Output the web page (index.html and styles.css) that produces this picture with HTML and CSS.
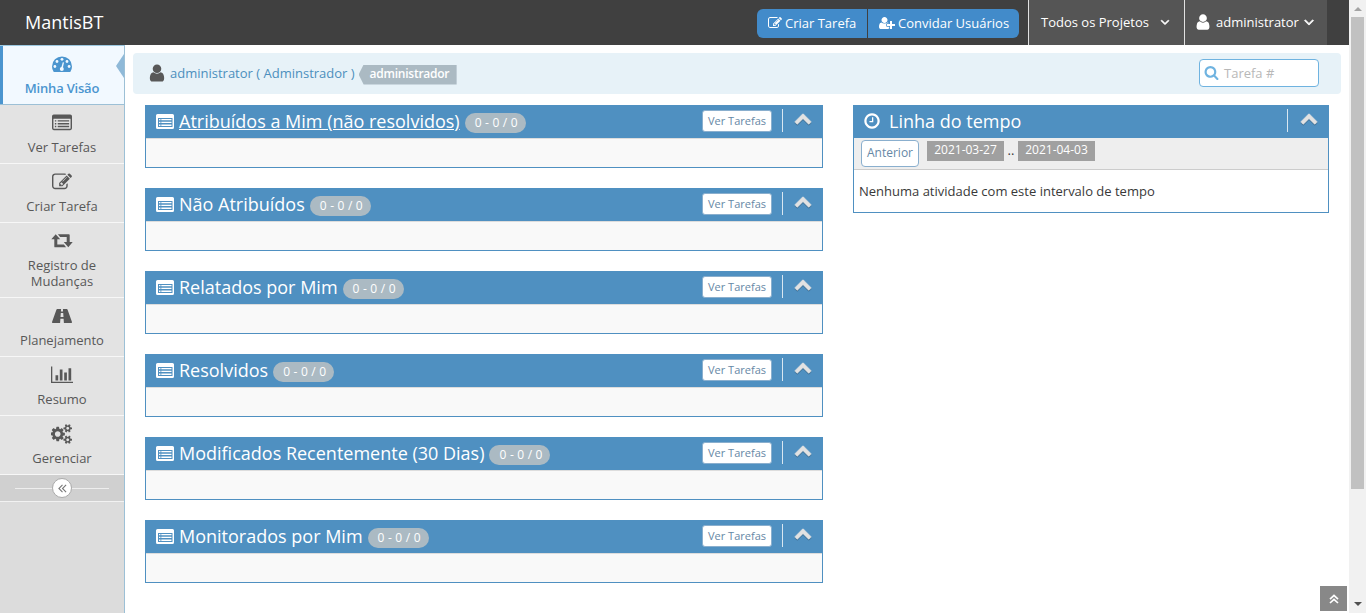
FILE: index.html
```html
<!DOCTYPE html>
<html lang="pt-BR">
<head>
<meta charset="utf-8">
<title>MantisBT</title>
<link rel="stylesheet" href="styles.css">
</head>
<body>
<svg class="defs" width="0" height="0">
  <symbol id="user" viewBox="0 0 1792 1792"><path d="M1536 1399q0 109-62.5 187t-150.5 78h-854q-88 0-150.5-78t-62.5-187q0-85 8.5-160.5t31.5-152 58.5-131 94-89 134.5-34.5q131 128 313 128t313-128q76 0 134.5 34.5t94 89 58.5 131 31.5 152 8.5 160.5zm-256-887q0 159-112.5 271.5t-271.5 112.5-271.5-112.5-112.5-271.5 112.5-271.5 271.5-112.5 271.5 112.5 112.5 271.5z"/></symbol>
  <symbol id="user-plus" viewBox="0 0 2048 1792"><path d="M704 896q-159 0-271.5-112.5t-112.5-271.5 112.500-271.5 271.5-112.5 271.5 112.5 112.500 271.5-112.5 271.5-271.5 112.500zm960 128h352q13 0 22.500 9.500t9.500 22.500v192q0 13-9.500 22.500t-22.500 9.500h-352v352q0 13-9.500 22.500t-22.500 9.500h-192q-13 0-22.500-9.500t-9.500-22.500v-352h-352q-13 0-22.500-9.500t-9.500-22.500v-192q0-13 9.500-22.500t22.500-9.500h352v-352q0-13 9.500-22.500t22.500-9.500h192q13 0 22.500 9.500t9.500 22.500v352zm-736 224q0 52 38 90t90 38h256v238q-68 50-171 50h-874q-121 0-194-69t-73-190q0-53 3.500-103.500t14-109 26.500-108.500 43-97.500 62-81 85.500-53.500 111.500-20q19 0 39 17 79 61 154.500 91.500t164.500 30.500 164.500-30.500 154.500-91.500q20-17 39-17 132 0 217 96h-223q-52 0-90 38t-38 90v192z"/></symbol>
  <symbol id="edit" viewBox="0 0 1792 1792"><path d="M888 1184l116-116-152-152-116 116v56h96v96h56zm440-720q-16-16-33 1l-350 350q-17 17-1 33t33-1l350-350q17-17 1-33zm80 594v190q0 119-84.5 203.5t-203.5 84.5h-832q-119 0-203.5-84.5t-84.5-203.5v-832q0-119 84.5-203.5t203.5-84.5h832q63 0 117 25 15 7 18 23 3 17-9 29l-49 49q-14 14-32 8-23-6-45-6h-832q-66 0-113 47t-47 113v832q0 66 47 113t113 47h832q66 0 113-47t47-113v-126q0-13 9-22l64-64q15-15 35-7t20 29zm-96-738l288 288-672 672h-288v-288zm444 132l-92 92-288-288 92-92q28-28 68-28t68 28l152 152q28 28 28 68t-28 68z"/></symbol>
  <symbol id="list" viewBox="0 0 1792 1792"><path fill-rule="evenodd" d="M160 128H1632Q1792 128 1792 288V1376Q1792 1536 1632 1536H160Q0 1536 0 1376V288Q0 128 160 128ZM160 512Q128 512 128 544V1376Q128 1408 160 1408H1632Q1664 1408 1664 1376V544Q1664 512 1632 512Z"/><path d="M256 640h128v128H256zM512 640h1024v128H512zM256 896h128v128H256zM512 896h1024v128H512zM256 1152h128v128H256zM512 1152h1024v128H512z"/></symbol>
  <symbol id="list-small" viewBox="0 0 18 18"><path fill-rule="evenodd" d="M1.500 2h15Q18 2 18 3.500v12q0 1.500-1.500 1.500h-15Q0 17 0 15.500v-12Q0 2 1.500 2zM2 6v9h14.500V6z"/><path d="M3 7h1.500v1.300H3zM5.300 7h10.200v1.300H5.300zM3 9.800h1.500v1.300H3zM5.300 9.800h10.200v1.300H5.300zM3 12.600h1.500v1.300H3zM5.300 12.600h10.200v1.300H5.300z"/></symbol>
  <symbol id="angle-down" viewBox="0 0 1792 1792"><path d="M1395 736q0 13-10 23l-466 466q-10 10-23 10t-23-10l-466-466q-10-10-10-23t10-23l50-50q10-10 23-10t23 10l393 393 393-393q10-10 23-10t23 10l50 50q10 10 10 23z"/></symbol>
  <symbol id="search" viewBox="0 0 1792 1792"><path d="M1216 832q0-185-131.5-316.5t-316.5-131.5-316.5 131.5-131.5 316.5 131.5 316.5 316.5 131.5 316.5-131.5 131.5-316.5zm512 832q0 52-38 90t-90 38q-54 0-90-38l-343-342q-179 124-399 124-143 0-273.5-55.5t-225-150-150-225-55.5-273.5 55.5-273.5 150-225 225-150 273.5-55.5 273.5 55.5 225 150 150 225 55.5 273.5q0 220-124 399l343 343q37 37 37 90z"/></symbol>
  <symbol id="clock" viewBox="0 0 1792 1792"><path d="M1024 544v448q0 14-9 23t-23 9h-320q-14 0-23-9t-9-23v-64q0-14 9-23t23-9h224v-352q0-14 9-23t23-9h64q14 0 23 9t9 23zm416 352q0-148-73-273t-198-198-273-73-273 73-198 198-73 273 73 273 198 198 273 73 273-73 198-198 73-273zm224 0q0 209-103 385.5t-279.5 279.5-385.5 103-385.5-103-279.5-279.5-103-385.5 103-385.5 279.5-279.5 385.5-103 385.5 103 279.5 279.5 103 385.5z"/></symbol>
  <symbol id="chevron-up" viewBox="0 0 1792 1792"><path d="M1683 1331l-166 165q-19 19-45 19t-45-19l-531-531-531 531q-19 19-45 19t-45-19l-166-165q-19-19-19-45.5t19-45.5l742-741q19-19 45-19t45 19l742 741q19 19 19 45.5t-19 45.5z"/></symbol>
  <symbol id="gears" viewBox="0 0 1920 1792"><path d="M832 896q0-106-75-181t-181-75-181 75-75 181 75 181 181 75 181-75 75-181zm768 512q0-52-38-90t-90-38-90 38-38 90q0 53 37.5 90.5t90.5 37.5 90.5-37.5 37.5-90.5zm0-1024q0-52-38-90t-90-38-90 38-38 90q0 53 37.5 90.5t90.5 37.5 90.5-37.5 37.5-90.5zm-384 421v185q0 10-7 19.5t-16 10.5l-155 24q-11 35-32 76 34 48 90 115 7 11 7 20 0 12-7 19-23 30-82.5 89.5t-78.5 59.5q-11 0-21-7l-115-90q-37 19-77 31-11 108-23 155-7 24-30 24h-186q-11 0-20-7.5t-10-17.5l-23-153q-34-10-75-31l-118 89q-7 7-20 7-11 0-21-8-144-133-144-160 0-9 7-19 10-14 41-53t47-61q-23-44-35-82l-152-24q-10-1-17-9.5t-7-19.5v-185q0-10 7-19.5t16-10.5l155-24q11-35 32-76-34-48-90-115-7-11-7-20 0-12 7-20 22-30 82-89t79-59q11 0 21 7l115 90q34-18 77-32 11-108 23-154 7-24 30-24h186q11 0 20 7.5t10 17.5l23 153q34 10 75 31l118-89q8-7 20-7 11 0 21 8 144 133 144 160 0 8-7 19-12 16-42 54t-45 60q23 48 34 82l152 23q10 2 17 10.5t7 19.5zm640 533v140q0 16-149 31-12 27-30 52 51 113 51 138 0 4-4 7-122 71-124 71-8 0-46-47t-52-68q-20 2-30 2t-30-2q-14 21-52 68t-46 47q-2 0-124-71-4-3-4-7 0-25 51-138-18-25-30-52-149-15-149-31v-140q0-16 149-31 13-29 30-52-51-113-51-138 0-4 4-7 4-2 35-20t59-34 30-16q8 0 46 46.5t52 67.5q20-2 30-2t30 2q51-71 92-112l6-2q4 0 124 70 4 3 4 7 0 25-51 138 17 23 30 52 149 15 149 31zm0-1024v140q0 16-149 31-12 27-30 52 51 113 51 138 0 4-4 7-122 71-124 71-8 0-46-47t-52-68q-20 2-30 2t-30-2q-14 21-52 68t-46 47q-2 0-124-71-4-3-4-7 0-25 51-138-18-25-30-52-149-15-149-31v-140q0-16 149-31 13-29 30-52-51-113-51-138 0-4 4-7 4-2 35-20t59-34 30-16q8 0 46 46.5t52 67.5q20-2 30-2t30 2q51-71 92-112l6-2q4 0 124 70 4 3 4 7 0 25-51 138 17 23 30 52 149 15 149 31z"/></symbol>
  <symbol id="double-left" viewBox="0 0 10 10"><path d="M5 1L1 5l4 4M9 1L5 5l4 4" fill="none" stroke="currentColor" stroke-width="1.2"/></symbol>
  <symbol id="double-up" viewBox="0 0 10 10"><path d="M1 5.200L5 1.500l4 3.700M1 9L5 5.300 9 9" fill="none" stroke="currentColor" stroke-width="1.700"/></symbol>
</svg>

<div class="app">
  <header class="navbar">
    <span class="brand">MantisBT</span>
    <div class="actions">
      <a class="action"><svg class="i14"><use href="#edit"/></svg>Criar Tarefa</a>
      <a class="action invite"><svg class="i-plus"><use href="#user-plus"/></svg>Convidar Usuários</a>
    </div>
    <div class="menu projects">Todos os Projetos<svg class="i14 bold"><use href="#angle-down"/></svg></div>
    <div class="menu account"><svg class="i18"><use href="#user"/></svg><span>administrator</span><svg class="i16 bold"><use href="#angle-down"/></svg></div>
  </header>

  <div class="body">
    <nav class="sidebar">
      <a class="item active">
        <svg class="i20" viewBox="0 0 20 20"><path d="M0 11.400a10 10 0 0 1 20 0q0 2.900-1.600 5.300-.2.300-.6.300H2.200q-.4 0-.6-.3Q0 14.300 0 11.400z"/><g fill="#f2f9ff"><circle cx="2.900" cy="11.500" r="1.400"/><circle cx="5" cy="6.500" r="1.400"/><circle cx="10" cy="4.300" r="1.400"/><circle cx="15" cy="6.500" r="1.400"/><circle cx="17.100" cy="11.500" r="1.400"/><circle cx="9.800" cy="14" r="2"/><path d="M10.800 7.200l1.200.3-1.300 6-1.500-.4z"/></g></svg>
        <span>Minha Visão</span><i class="arrow"></i>
      </a>
      <a class="item"><svg class="i20"><use href="#list"/></svg><span>Ver Tarefas</span></a>
      <a class="item"><svg class="i20"><use href="#edit"/></svg><span>Criar Tarefa</span></a>
      <a class="item double"><svg class="i-wide" viewBox="0 0 22 20"><path d="M4.700 3.200L9.200 8.300H6.300v5.300h6.600l2.200 2.700H4.200q-.9 0-.9-.9V8.300H.3zM17.300 16.300l-4.500-5.200h2.900V5.900H9.100L6.900 3.200h10.900q.9 0 .9.900v7h3z"/></svg><span>Registro de<br>Mudanças</span></a>
      <a class="item"><svg class="i20" viewBox="0 0 20 20"><path fill-rule="evenodd" d="M5.200 3h3.900l-.2 2.500h2.200L10.900 3h3.900q.5 0 .7.500l4.400 12.300q.4 1.200-.5 1.200h-7.500l-.3-4.200H8.400L8.100 17H.6q-.9 0-.5-1.200L4.500 3.500Q4.700 3 5.200 3zM8.800 7L8.500 11h3L11.200 7z"/></svg><span>Planejamento</span></a>
      <a class="item"><svg class="i-wide" viewBox="0 0 22 20"><path d="M0 1.500h1.300v15.200H23V18H0zM4.500 10.200h2.700v5.200H4.500zM8.800 4.600h2.700v10.800H8.800zM13.200 7.400h2.700v8H13.200zM17.500 3.200h2.700v12.200h-2.700z"/></svg><span>Resumo</span></a>
      <a class="item"><svg class="i-wide"><use href="#gears"/></svg><span>Gerenciar</span></a>
      <div class="toggle"><span class="knob"><svg><use href="#double-left"/></svg></span></div>
    </nav>

    <main class="main">
      <div class="crumbs">
        <svg class="i20"><use href="#user"/></svg>
        <span class="who">administrator ( Adminstrador )</span>
        <span class="role">administrador</span>
        <label class="find"><svg class="i15"><use href="#search"/></svg>Tarefa #</label>
      </div>
      <div class="columns">
        <div class="left">
          <section class="panel"><h4><svg class="i18"><use href="#list-small"/></svg><a class="linked">Atribuídos a Mim (não resolvidos)</a><span class="badge">0 - 0 / 0</span><a class="view">Ver Tarefas</a><span class="fold"><svg class="i18"><use href="#chevron-up"/></svg></span></h4><div class="empty"></div></section>
          <section class="panel"><h4><svg class="i18"><use href="#list-small"/></svg><a>Não Atribuídos</a><span class="badge">0 - 0 / 0</span><a class="view">Ver Tarefas</a><span class="fold"><svg class="i18"><use href="#chevron-up"/></svg></span></h4><div class="empty"></div></section>
          <section class="panel"><h4><svg class="i18"><use href="#list-small"/></svg><a>Relatados por Mim</a><span class="badge">0 - 0 / 0</span><a class="view">Ver Tarefas</a><span class="fold"><svg class="i18"><use href="#chevron-up"/></svg></span></h4><div class="empty"></div></section>
          <section class="panel"><h4><svg class="i18"><use href="#list-small"/></svg><a>Resolvidos</a><span class="badge">0 - 0 / 0</span><a class="view">Ver Tarefas</a><span class="fold"><svg class="i18"><use href="#chevron-up"/></svg></span></h4><div class="empty"></div></section>
          <section class="panel"><h4><svg class="i18"><use href="#list-small"/></svg><a>Modificados Recentemente (30 Dias)</a><span class="badge">0 - 0 / 0</span><a class="view">Ver Tarefas</a><span class="fold"><svg class="i18"><use href="#chevron-up"/></svg></span></h4><div class="empty"></div></section>
          <section class="panel"><h4><svg class="i18"><use href="#list-small"/></svg><a>Monitorados por Mim</a><span class="badge">0 - 0 / 0</span><a class="view">Ver Tarefas</a><span class="fold"><svg class="i18"><use href="#chevron-up"/></svg></span></h4><div class="empty"></div></section>
        </div>
        <section class="panel timeline">
          <h4><svg class="i18"><use href="#clock"/></svg><a>Linha do tempo</a><span class="fold"><svg class="i18"><use href="#chevron-up"/></svg></span></h4>
          <div class="range"><a class="prev">Anterior</a><span class="date">2021-03-27</span><span class="dots">..</span><span class="date">2021-04-03</span></div>
          <p class="none">Nenhuma atividade com este intervalo de tempo</p>
        </section>
      </div>
    </main>
  </div>
</div>
<div class="scrollbar"><i class="up"></i><i class="thumb"></i><i class="down"></i></div>
<a class="to-top"><svg><use href="#double-up"/></svg></a>
</body>
</html>
```
FILE: styles.css
```css
* { box-sizing: border-box; }
body { margin: 0; display: flex; height: 613px; overflow: hidden; background: #fff; color: #393939; font: 13px/20px "Open Sans", sans-serif; }
svg { fill: currentColor; flex: none; display: block; }
.defs { position: absolute; }
.i14 { width: 14px; height: 14px; }
.i15 { width: 15px; height: 15px; }
.i16 { width: 16px; height: 16px; }
.i18 { width: 18px; height: 18px; }
.i20 { width: 20px; height: 20px; }
.i-wide { width: 22px; height: 20px; }
.i-plus { width: 16px; height: 14px; }
.bold { stroke: currentColor; stroke-width: 90; }
.app { width: 1349px; display: flex; flex-direction: column; }

.navbar { height: 45px; flex: none; display: flex; background: #404040; color: #fff; padding-right: 22px; }
.brand { font-size: 18px; line-height: 45px; padding-left: 25px; margin-right: auto; }
.actions { display: flex; gap: 1px; margin: 9px 9px 0 0; height: 29px; }
.action { width: 110px; display: flex; align-items: center; gap: 3px; background: #428bca; padding: 0 0 1px 11px; border-radius: 6px 0 0 6px; white-space: nowrap; }
.invite { width: 151px; border-radius: 0 6px 6px 0; }
.menu { display: flex; align-items: center; background: #555; border-left: 1px solid #e1e1e1; padding-bottom: 1px; }
.projects { width: 156px; padding-left: 12px; gap: 9px; }
.account { width: 143px; padding-left: 9px; gap: 4px; }
.account .i16 { margin-left: -2px; }

.body { display: flex; flex: 1; min-height: 0; }
.sidebar { width: 125px; background: #dcdcdc; border-right: 1px solid #9cc0d6; }
.item { display: flex; flex-direction: column; align-items: center; height: 59px; padding-top: 8px; background: #e3e3e3; border-bottom: 1px solid #f7f7f7; color: #585858; text-align: center; line-height: 16px; }
.item span { margin-top: 6px; }
.double { height: 75px; }
.active { position: relative; height: 60px; padding-top: 9px; background: #f2f9ff; border-top: 1px solid #9cc8e0; border-bottom: 1px solid #9cc0d6; box-shadow: inset 3px 0 #4b95cf; color: #4b95cf; font-weight: 600; letter-spacing: -.2px; }
.active span { margin-top: 5px; }
.arrow { position: absolute; right: 0; top: 8px; border: solid transparent; border-width: 12px 8px 12px 0; border-right-color: #8fb9d8; }
.toggle { height: 27px; display: flex; justify-content: center; align-items: center; border-bottom: 1px solid #f2f2f2; background: linear-gradient(#eee, #eee) 15px 13px / 94px 1px no-repeat #d0d0d0; }
.knob { width: 20px; height: 20px; border: 1px solid #aaa; border-radius: 50%; background: #fff; color: #777; display: grid; place-items: center; }
.knob svg { width: 9px; height: 9px; }

.main { flex: 1; padding: 8px 8px 0; }
.crumbs { height: 41px; display: flex; align-items: center; padding: 0 22px 2px 14px; background: #e7f2f8; border-radius: 4px; color: #585858; }
.who { color: #4c8fbd; margin-left: 3px; }
.role { width: 98px; height: 20px; margin: 4px 0 0 4px; padding-left: 11px; background: #abbac3; color: #fff; font-size: 12px; line-height: 18px; font-weight: 600; letter-spacing: -.25px; clip-path: polygon(5px 0, 100% 0, 100% 100%, 5px 100%, 0 50%); }
.find { margin-left: auto; width: 120px; height: 28px; display: flex; align-items: center; gap: 5px; padding: 1px 0 0 4px; border: 1px solid #6fb3e0; border-radius: 4px; background: #fff; color: #b8b8b8; }
.find svg { color: #6fb3e0; margin-top: -2px; }

.columns { display: flex; align-items: flex-start; gap: 30px; padding: 11px 0 0 12px; }
.left { width: 678px; display: flex; flex-direction: column; gap: 20px; }
.panel { border: 1px solid #4f90c1; height: 63px; }
.panel h4 { display: flex; align-items: center; margin: 0; height: 32px; padding: 0 0 2px 10px; background: #4f90c1; color: #fff; font-size: 18px; font-weight: 400; }
.panel h4 > a:first-of-type { margin-left: 5px; }
.linked { text-decoration: underline; }
.badge { width: 61px; height: 20px; margin: 3px 0 0 5px; padding-left: 2px; border-radius: 10px; background: #abbac3; font-size: 12px; line-height: 19px; text-align: center; word-spacing: .4px; }
.view { margin-left: auto; width: 70px; height: 22px; border: 1px solid #8aafce; border-radius: 3px; background: #fff; color: #6688a6; font-size: 11px; line-height: 19px; text-align: center; }
.fold { width: 40px; height: 23px; margin: -1px 0 0 10px; padding: 0 0 0 11px; border-left: 1px solid #d9e7f1; color: #e2e2e2; }
.fold svg { filter: drop-shadow(0 1px 0 rgba(0, 0, 0, .25)); stroke: currentColor; stroke-width: 50; }
.empty { height: 29px; border-top: 1px solid #ddd; background: #f9f9f9; }
.timeline { width: 476px; height: 108px; }
.timeline h4 { padding-left: 9px; }
.timeline h4 > a:first-of-type { margin-left: 8px; }
.timeline .fold { width: 41px; margin-left: auto; padding-left: 12px; }
.range { height: 32px; display: flex; background: #eee; border-bottom: 1px solid #ccc; padding: 2px 0 0 7px; }
.prev { width: 58px; height: 27px; margin-right: 8px; border: 1px solid #8aafce; border-radius: 4px; background: #fff; color: #6688a6; font-size: 12px; line-height: 24px; text-align: center; }
.date { width: 77px; height: 20px; margin-top: 1px; background: #a0a0a0; color: #fff; line-height: 18px; font-size: 12px; text-align: center; }
.dots { width: 14px; text-align: center; }
.none { margin: 11px 0 0 5px; }

.scrollbar { width: 17px; height: 613px; background: #f1f1f1; display: flex; flex-direction: column; align-items: center; }
.up { border: solid transparent; border-width: 0 4px 4px; border-bottom-color: #a3a3a3; margin-top: 7px; }
.thumb { width: 13px; height: 472px; margin-top: 6px; background: #c1c1c1; }
.down { border: solid transparent; border-width: 4px 4px 0; border-top-color: #505050; margin: auto 0 7px; }
.to-top { position: fixed; left: 1320px; top: 586px; width: 27px; height: 25px; background: #888; color: #fff; display: grid; place-items: center; }
.to-top svg { width: 10px; height: 10px; }
```
